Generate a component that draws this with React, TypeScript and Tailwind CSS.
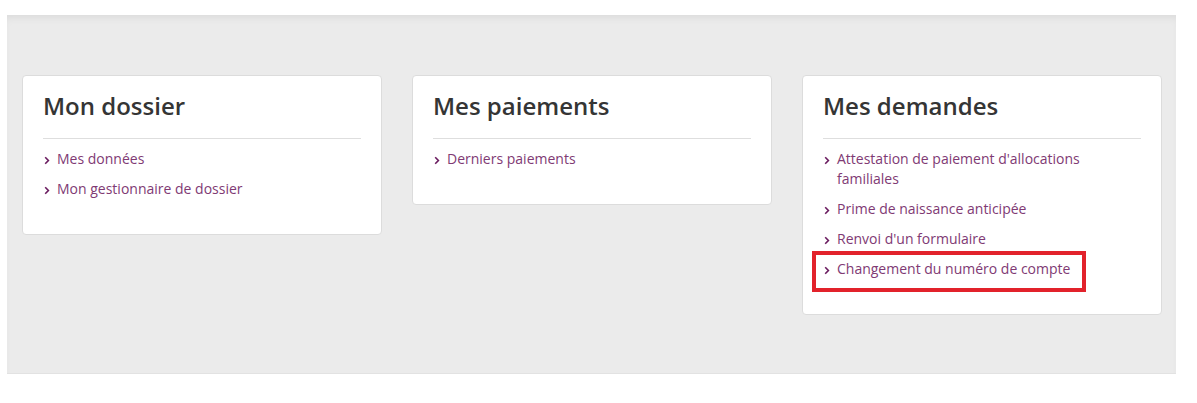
import React from 'react';

type Card = { title: string; links: string[]; highlight?: string };

const cards: Card[] = [
  { title: 'Mon dossier', links: ['Mes données', 'Mon gestionnaire de dossier'] },
  { title: 'Mes paiements', links: ['Derniers paiements'] },
  {
    title: 'Mes demandes',
    links: [
      "Attestation de paiement d'allocations familiales",
      'Prime de naissance anticipée',
      "Renvoi d'un formulaire",
      'Changement du numéro de compte',
    ],
    highlight: 'Changement du numéro de compte',
  },
];

function Chevron() {
  return (
    <svg width="6" height="9" viewBox="0 0 6 9" className="absolute left-[1px] top-[7px]">
      <path d="M1.2 1.2 L4.4 4.5 L1.2 7.8" fill="none" stroke="#6a1b5f" strokeWidth="1.6" />
    </svg>
  );
}

export default function App() {
  return (
    <div className="min-h-screen bg-white pt-[15px]" style={{ fontFamily: '"Open Sans", "Noto Sans", sans-serif' }}>
      <div className="ml-[7px] w-[1169px] h-[359px] bg-[#ebebeb] shadow-[inset_0_6px_8px_-4px_rgba(0,0,0,0.08)] border-b border-[#e2e2e2]">
        <div className="grid grid-cols-[360px_360px_360px] gap-[30px] pl-[15px] pt-[60px] items-start">
          {cards.map((card) => (
            <div
              key={card.title}
              className="bg-white rounded-[4px] border border-[#dcdcdc] px-5 pt-[14px] pb-[35px]"
            >
              <h2 className="text-[24px] leading-[32px] font-semibold text-[#353535]">{card.title}</h2>
              <div className="mt-[16px] h-px bg-[#dedede]" />
              <ul className="mt-[10px] flex flex-col gap-[10px]">
                {card.links.map((link) => (
                  <li key={link} className="relative pl-[14px] text-[14px] leading-[20px] text-[#803a74]">
                    <Chevron />
                    {link === "Attestation de paiement d'allocations familiales" ? (
                      <>
                        Attestation de paiement d'allocations
                        <br />
                        familiales
                      </>
                    ) : (
                      link
                    )}
                    {card.highlight === link && (
                      <span className="absolute -left-[11px] -top-[8px] w-[274px] h-[41px] border-4 border-[#e2222b]" />
                    )}
                  </li>
                ))}
              </ul>
            </div>
          ))}
        </div>
      </div>
    </div>
  );
}
